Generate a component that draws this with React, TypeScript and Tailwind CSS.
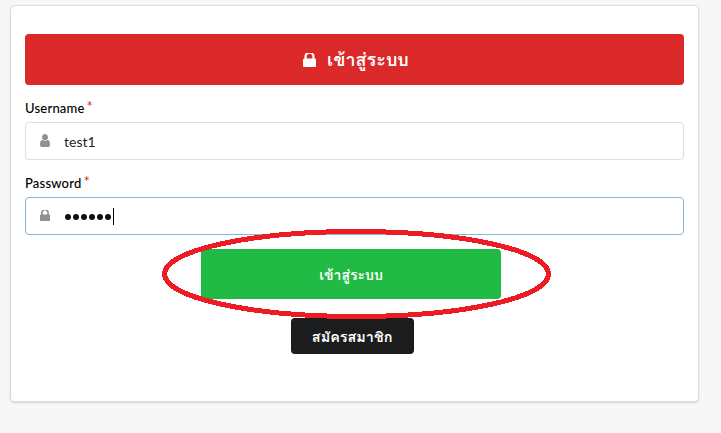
import React from "react";

function LockIcon({ className }: { className: string }) {
  return (
    <svg viewBox="0 256 1152 1280" className={className} fill="currentColor" preserveAspectRatio="none">
      <path d="M320 768h512v-192q0-106-75-181t-181-75-181 75-75 181v192zm832 96v576q0 40-28 68t-68 28h-960q-40 0-68-28t-28-68v-576q0-40 28-68t68-28h32v-192q0-184 132-316t316-132 316 132 132 316v192h32q40 0 68 28t28 68z" />
    </svg>
  );
}

function UserIcon({ className }: { className: string }) {
  return (
    <svg viewBox="0 128 1280 1536" className={className} fill="currentColor" preserveAspectRatio="none">
      <path d="M1280 1399q0 109-62.5 187t-150.5 78h-854q-88 0-150.5-78t-62.5-187q0-85 8.5-160.5t31.5-152 58.5-131 94-89 134.5-34.5q131 128 313 128t313-128q76 0 134.5 34.5t94 89 58.5 131 31.5 152 8.5 160.5zm-256-887q0 159-112.5 271.5t-271.5 112.5-271.5-112.5-112.5-271.5 112.5-271.5 271.5-112.5 271.5 112.5 112.5 271.5z" />
    </svg>
  );
}

function Label({ text }: { text: string }) {
  return (
    <div className="flex h-[18px] text-[13px] leading-[18px] font-medium tracking-[0.2px] text-black">
      <span>{text}</span>
      <span className="-mt-[2px] ml-[2px] text-[15px] font-normal text-[#db2828]">*</span>
    </div>
  );
}

export default function App() {
  return (
    <div className="relative h-[433px] w-[721px] overflow-hidden bg-[#f7f7f7] pt-[5px] pl-[10px] font-[Lato,Loma,Waree,'Noto_Sans_Thai_Looped','Noto_Sans_Thai',sans-serif]">
      <main className="flex h-[397px] w-[689px] flex-col rounded-[4px] border border-[#dcdcdc] bg-white px-[14px] pt-[28px] shadow-[0_1px_2px_0_rgba(34,36,38,0.15)]">
        <h1 className="flex h-[51px] shrink-0 items-center justify-center rounded-[4px] bg-[#db2828] pl-[3px] text-[18px] font-bold text-white">
          <LockIcon className="mr-[11px] h-[14px] w-[13px]" />
          <span className="w-[82px] whitespace-nowrap">เข้าสู่ระบบ</span>
        </h1>
        <div className="mt-[14px]">
          <Label text="Username" />
          <div className="mt-[5px] flex h-[38px] items-center rounded-[4px] border border-[#dededf] pl-[14px]">
            <UserIcon className="-mt-px h-[13px] w-[10px] text-[#919191]" />
            <span className="ml-[14px] pt-px text-[14px] leading-[18px] text-black/90">test1</span>
          </div>
        </div>
        <div className="mt-[14px]">
          <Label text="Password" />
          <div className="mt-[5px] flex h-[38px] items-center rounded-[4px] border border-[#85b7d9] pl-[14px]">
            <LockIcon className="-mt-px h-[11px] w-[10px] text-[#919191]" />
            <div className="mt-[2px] ml-[14px] flex gap-[2px] pl-px">
              {[0, 1, 2, 3, 4, 5].map((i) => (
                <span key={i} className="size-[6px] rounded-full bg-[#101010]" />
              ))}
            </div>
            <span className="ml-[2px] h-[17px] w-px bg-black" />
          </div>
        </div>
        <div className="mt-[14px] flex flex-col items-center pr-[1px]">
          <button className="h-[50px] w-[300px] -translate-x-[3px] rounded-[4px] bg-[#21ba45] text-[14px] font-bold text-white">
            เข้าสู่ระบบ
          </button>
          <button className="mt-[19px] h-[36px] w-[123px] -translate-x-[2px] rounded-[4px] bg-[#1b1c1d] text-[14px] font-bold whitespace-nowrap text-white">
            <span className="inline-block scale-x-[1.03]">สมัครสมาชิก</span>
          </button>
        </div>
      </main>
      <svg className="pointer-events-none absolute inset-0 h-[433px] w-[721px]" viewBox="0 0 721 433" fill="none" shapeRendering="crispEdges">
        <ellipse cx="356.5" cy="274" rx="192" ry="42.5" stroke="#ed1c24" strokeWidth="5" />
      </svg>
    </div>
  );
}
